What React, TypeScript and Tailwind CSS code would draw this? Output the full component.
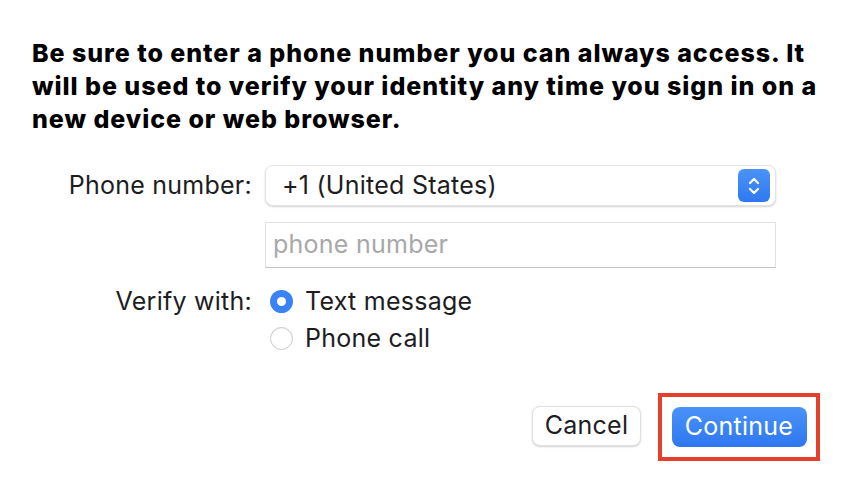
import React from 'react';

function Stepper() {
  return (
    <div className="flex h-[33px] w-[32px] items-center justify-center rounded-[6px] bg-gradient-to-b from-[#4b93f8] to-[#2f78f0]">
      <svg width="14" height="22" viewBox="0 0 14 22" fill="none">
        <path d="M3 8 L7 4 L11 8" stroke="white" strokeWidth="2.2" strokeLinecap="round" strokeLinejoin="round" />
        <path d="M3 14 L7 18 L11 14" stroke="white" strokeWidth="2.2" strokeLinecap="round" strokeLinejoin="round" />
      </svg>
    </div>
  );
}

function Radio({ checked, label }: { checked?: boolean; label: string }) {
  return (
    <div className="flex h-[37px] items-center gap-[12px]">
      {checked ? (
        <span className="flex h-[23px] w-[23px] items-center justify-center rounded-full bg-[#3a82f7]">
          <span className="h-[9px] w-[9px] rounded-full bg-white" />
        </span>
      ) : (
        <span className="h-[23px] w-[23px] rounded-full border border-[#c9c9c9] bg-white shadow-[inset_0_1px_1px_rgba(0,0,0,0.05)]" />
      )}
      <span>{label}</span>
    </div>
  );
}

export default function App() {
  return (
    <div
      className="h-[482px] w-[847px] overflow-hidden bg-white text-[25px] tracking-[0.01em] text-[#1d1d1f]"
      style={{ fontFamily: 'Inter, "Liberation Sans", sans-serif' }}
    >
      <p className="w-[835px] pl-[32px] pt-[37px] text-[25px] font-extrabold leading-[33px] tracking-[0.038em] text-black">
        Be sure to enter a phone number you can always access. It will be used to verify your identity any time you sign in on a new device or web browser.
      </p>

      <div className="mt-[29px] grid grid-cols-[252px_511px] gap-x-[13px]">
        <div className="flex h-[41px] items-center justify-end">Phone number:</div>
        <div className="flex h-[41px] items-center justify-between rounded-[8px] border border-[#e4e4e4] bg-white pl-[16px] pr-[5px] shadow-[0_1px_2px_rgba(0,0,0,0.18)]">
          <span>+1 (United States)</span>
          <Stepper />
        </div>

        <div />
        <div className="mt-[16px] flex h-[46px] items-center border border-[#e2e2e2] border-b-[#c4c4c4] bg-white pl-[7px] text-[#a8a8a8]">
          phone number
        </div>

        <div className="mt-[15px] flex h-[37px] items-center justify-end">Verify with:</div>
        <div className="mt-[15px] flex flex-col pl-[5px]">
          <Radio checked label="Text message" />
          <Radio label="Phone call" />
        </div>
      </div>

      <div className="mt-[36px] flex justify-end pr-[27px]">
        <button className="mr-[17px] mt-[13px] h-[40px] w-[109px] rounded-[8px] border border-[#e0e0e0] bg-white text-[25px] text-[#1d1d1f] shadow-[0_1px_2px_rgba(0,0,0,0.18)]">
          Cancel
        </button>
        <div className="flex h-[68px] w-[162px] items-center justify-center border-[4px] border-[#e5402b]">
          <button className="h-[40px] w-[135px] rounded-[8px] bg-gradient-to-b from-[#4a92f8] to-[#2e77ef] text-[25px] text-white">
            Continue
          </button>
        </div>
      </div>
    </div>
  );
}
